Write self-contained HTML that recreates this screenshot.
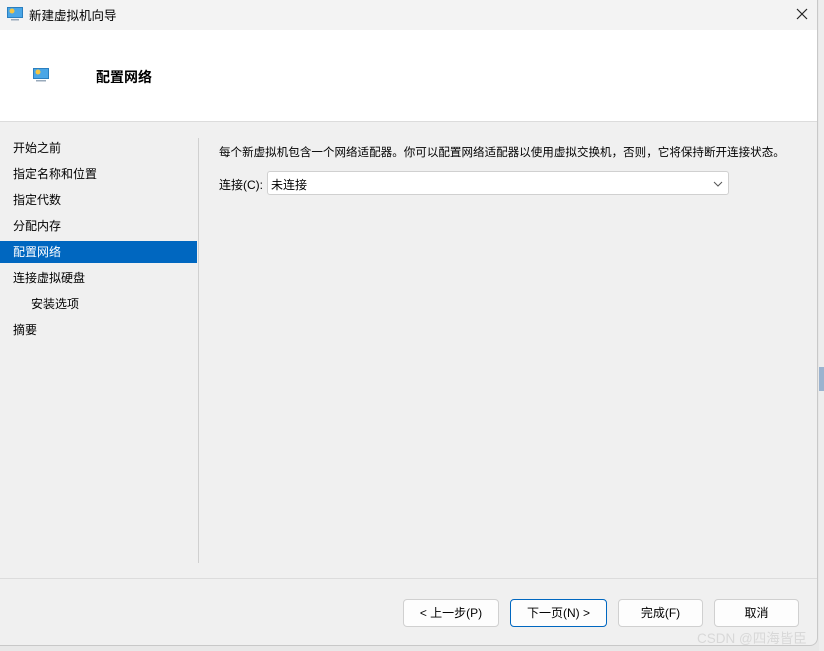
<!DOCTYPE html>
<html><head><meta charset="utf-8"><style>
*{margin:0;padding:0;box-sizing:border-box}
body{width:824px;height:651px;background:#e8e8e8;position:relative;overflow:hidden;font-family:"Liberation Sans","Noto Sans CJK SC",sans-serif;font-size:12px;color:#000}
.win{position:absolute;left:0;top:0;width:818px;height:646px;background:#f0f0f0;border-right:1px solid #c8c8c8;border-bottom:1px solid #c8c8c8;border-radius:0 0 8px 0;overflow:hidden}
.title{position:absolute;left:0;top:0;width:818px;height:30px;background:#f3f3f3}
.title span{position:absolute;left:29px;top:5px;font-size:12.5px}
.close{position:absolute;left:796px;top:8px}
.head{position:absolute;left:0;top:30px;width:818px;height:92px;background:#fff;border-bottom:1px solid #dcdcdc}
.head b{position:absolute;left:96px;top:37px;font-size:14px}
.nav div{position:absolute;left:13px;height:22px;line-height:22px}
.sel{left:0!important;width:197px;background:#0067c0;color:#fff;padding-left:13px}
.vl{position:absolute;left:198px;top:138px;width:1px;height:425px;background:#d0d0d0}
.hl{position:absolute;left:0;top:578px;width:818px;height:1px;background:#dcdcdc}
.btn{position:absolute;top:599px;height:28px;background:#fdfdfd;border:1px solid #d0d0d0;border-radius:4px;text-align:center;line-height:26px}
.ext{position:absolute;left:819px;width:5px;background:#d8d8d8}
</style></head><body>
<div class="ext" style="top:0;height:651px;background:#ededed"></div>
<div class="ext" style="top:367px;height:24px;background:#9bb3cf"></div>
<div class="win">
<div class="title">
<svg style="position:absolute;left:7px;top:7px" width="16" height="14"><rect x="0.5" y="0.5" width="15" height="10" fill="#4aa6e6" stroke="#2a7fc0"/><circle cx="5" cy="4" r="2.5" fill="#f5c542"/><rect x="4" y="12" width="8" height="1.5" fill="#9ab"/></svg>
<span>新建虚拟机向导</span>
<svg class="close" width="12" height="12"><path d="M1 1L11 11M11 1L1 11" stroke="#222" stroke-width="1.2"/></svg>
</div>
<div class="head">
<svg style="position:absolute;left:33px;top:38px" width="16" height="14"><rect x="0.5" y="0.5" width="15" height="10" fill="#4aa6e6" stroke="#2a7fc0"/><circle cx="5" cy="4" r="2.5" fill="#f5c542"/><rect x="3" y="12" width="10" height="1.5" fill="#9ab"/></svg>
<b>配置网络</b>
</div>
<div class="nav">
<div style="top:137px">开始之前</div>
<div style="top:163px">指定名称和位置</div>
<div style="top:189px">指定代数</div>
<div style="top:215px">分配内存</div>
<div class="sel" style="top:241px">配置网络</div>
<div style="top:267px">连接虚拟硬盘</div>
<div style="top:293px;left:31px">安装选项</div>
<div style="top:319px">摘要</div>
</div>
<div class="vl"></div>
<div style="position:absolute;left:219px;top:144px;font-size:11.55px;white-space:nowrap">每个新虚拟机包含一个网络适配器。你可以配置网络适配器以使用虚拟交换机，否则，它将保持断开连接状态。</div>
<div style="position:absolute;left:219px;top:176px">连接(C):</div>
<div style="position:absolute;left:267px;top:171px;width:462px;height:24px;background:#fff;border:1px solid #d0d0d0;border-radius:3px;padding:4px 0 0 3px">未连接
<svg style="position:absolute;right:5px;top:9px" width="10" height="6"><path d="M1 1L5 5L9 1" stroke="#555" fill="none"/></svg></div>
<div class="hl"></div>
<div class="btn" style="left:403px;width:96px">&lt; 上一步(P)</div>
<div class="btn" style="left:510px;width:97px;border-color:#0067c0">下一页(N) &gt;</div>
<div class="btn" style="left:618px;width:85px">完成(F)</div>
<div class="btn" style="left:714px;width:85px">取消</div>
<div style="position:absolute;left:697px;top:627px;font-size:13.5px;color:#d8d8d8">CSDN @四海皆臣</div>
</div>
</body></html>
